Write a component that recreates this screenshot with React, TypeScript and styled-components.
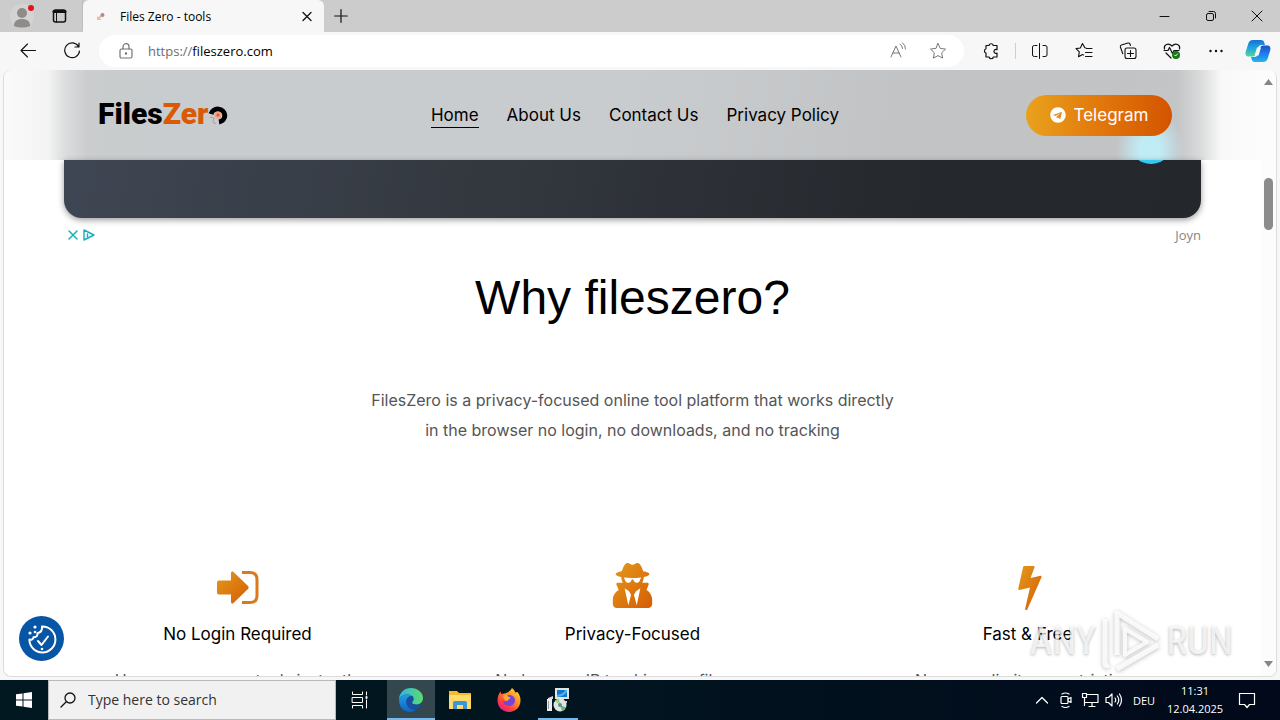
import React from 'react';
import styled, { createGlobalStyle, css } from 'styled-components';
import { FaUserSecret, FaTelegram } from 'react-icons/fa';

const ui = '"Open Sans", "Noto Sans", sans-serif';
const site = 'Inter, "Liberation Sans", sans-serif';

const GlobalStyle = createGlobalStyle`
  * { box-sizing: border-box; }
  body { margin: 0; overflow: hidden; font-family: ${ui}; color: #000; }
  button { margin: 0; padding: 0; border: 0; background: none; font: inherit; color: inherit; }
  svg { display: block; flex: none; }
`;

const Desktop = styled.div`
  height: 100vh;
  display: flex;
  flex-direction: column;
  background: #f7f7f7;
`;

/* Browser frame */
const TabStrip = styled.div`
  display: flex;
  height: 32px;
  flex: none;
  background: #cccccc;
`;
const Leading = styled.div`
  width: 83px;
  display: flex;
  align-items: center;
  gap: 12px;
  padding-left: 9px;
  border-radius: 0 0 4px 0;
  border-right: 1px solid #bdbdbd;
`;
const Tab = styled.div`
  width: 241px;
  display: flex;
  align-items: center;
  padding: 0 9px 0 10px;
  background: #f7f7f7;
  border-radius: 6px 6px 0 0;
  font-size: 12px;
`;
const TabTitle = styled.span`
  flex: 1;
  margin-left: 11px;
`;
const StripButton = styled.button<{ $w: number }>`
  width: ${(p) => p.$w}px;
  height: 32px;
  display: grid;
  place-items: center;
`;
const WindowControls = styled.div`
  display: flex;
  margin-left: auto;
`;
const Toolbar = styled.div`
  display: flex;
  align-items: center;
  height: 38px;
  flex: none;
  padding: 0 2px 0 6px;
  background: #f7f7f7;
`;
const ToolButton = styled.button<{ $w?: number }>`
  width: ${(p) => p.$w ?? 44}px;
  height: 32px;
  display: grid;
  place-items: center;
`;
const Divider = styled.span`
  width: 1px;
  height: 16px;
  margin: 0 2px;
  background: #cfcfcf;
`;
const AddressBar = styled.div`
  flex: 1;
  height: 32px;
  margin: 0 5px;
  padding: 0 6px 0 19px;
  display: flex;
  align-items: center;
  gap: 14px;
  border-radius: 16px;
  background: #fff;
  font-size: 13px;
`;
const Url = styled.span`
  flex: 1;
  color: #000;
  span { color: #6d6d6d; }
`;
const AddressActions = styled.div`
  display: flex;
`;

/* Page */
const Frame = styled.div`
  flex: 1;
  min-height: 0;
  margin: 0 3px 3px;
  display: flex;
  border: 1px solid #dcdcdc;
  border-top: 0;
  border-radius: 8px;
  overflow: hidden;
  background: #fff;
  position: relative;
`;
const Page = styled.div`
  flex: 1;
  min-width: 0;
  overflow: hidden;
  font-family: ${site};
`;
const Header = styled.header`
  height: 90px;
  padding: 0 89px 0 94px;
  display: grid;
  grid-template-columns: 1fr auto 1fr;
  align-items: center;
  background:
    radial-gradient(ellipse 34px 42px at calc(100% - 111px) 80px, #c0ecf6 30%, rgba(192, 236, 246, 0) 100%),
    linear-gradient(90deg, #fafafa 0, #f4f4f4 44px, #dcdedf 60px, #cacccd 84px, rgba(202, 204, 205, 0) 140px),
    linear-gradient(270deg, #fcfcfc 0, #f8f8f8 40px, #dadbdb 60px, #c4c5c6 84px, rgba(196, 197, 198, 0) 140px),
    linear-gradient(100deg, #c9ccce 0%, #c9ccce 50%, #c1c3c5 72%, #c3c4c5 100%);
`;
const Logo = styled.a`
  display: flex;
  align-items: center;
  color: #000;
  font: 900 30px/32px Roboto, sans-serif;
  padding-bottom: 2px;
  text-decoration: none;
  b { color: #d85a06; font-weight: 900; }
`;
const Nav = styled.nav`
  display: flex;
  gap: 28px;
`;
const NavLink = styled.a<{ $active?: boolean }>`
  color: #000;
  font-size: 17px;
  line-height: 24px;
  text-decoration: none;
  white-space: nowrap;
  border-bottom: 1px solid ${(p) => (p.$active ? '#000' : 'transparent')};
`;
const TelegramButton = styled.button`
  justify-self: end;
  display: flex;
  align-items: center;
  justify-content: center;
  gap: 8px;
  width: 146px;
  height: 41px;
  border-radius: 21px;
  background: linear-gradient(90deg, #e9a21c, #e2780c 50%, #d35400);
  color: #fff;
  font-size: 17px;
`;
const Banner = styled.div`
  height: 58px;
  margin: 0 60px;
  position: relative;
  overflow: hidden;
  border-radius: 0 0 18px 18px;
  background: linear-gradient(100deg, #3f4653 0%, #343940 35%, #25282d 75%, #24272c 100%);
`;
const BannerShadow = styled.div`
  border-radius: 18px;
  filter: drop-shadow(0 2px 3px rgba(0, 0, 0, 0.4));
`;
const BannerBadge = styled.span`
  position: absolute;
  right: 28px;
  top: -40px;
  width: 44px;
  height: 44px;
  border-radius: 50%;
  background: #35c8f0;
`;
const AdRow = styled.div`
  display: flex;
  align-items: center;
  height: 18px;
  margin: 8px 60px 0;
  padding-left: 3px;
  gap: 4px;
  font: 13px/18px ${ui};
  color: #858585;
`;
const AdLabel = styled.span`
  margin-left: auto;
`;
const Title = styled.h1`
  margin: 24px 0 0;
  font-family: "Liberation Sans", Arial, sans-serif;
  font-size: 48px;
  line-height: 60px;
  font-weight: 400;
  text-align: center;
`;
const Intro = styled.p`
  max-width: 536px;
  margin: 57px auto 0;
  font-size: 16px;
  line-height: 30px;
  color: #555;
  text-align: center;
`;
const Features = styled.section`
  display: grid;
  grid-template-columns: repeat(3, 1fr);
  margin: 115px 36px 0;
  text-align: center;
`;
const FeatureIcon = styled.div`
  height: 50px;
  display: grid;
  place-items: center;
`;
const FeatureTitle = styled.h2`
  margin: 10px 0 0;
  font-size: 17px;
  line-height: 28px;
  font-weight: 400;
`;
const FeatureText = styled.p`
  margin: 17px 0 0;
  font-size: 16px;
  line-height: 30px;
  color: #555;
`;
const Scrollbar = styled.div`
  width: 15px;
  flex: none;
  display: flex;
  flex-direction: column;
  align-items: center;
  padding: 9px 0;
  background: #fcfcfc;
`;
const Thumb = styled.div`
  width: 9px;
  height: 52px;
  margin-top: 93px;
  border-radius: 5px;
  background: #8b8b8b;
`;
const ScrollEnd = styled.div`
  margin-top: auto;
`;
const CookieButton = styled.button`
  position: absolute;
  left: 15px;
  bottom: 15px;
  width: 45px;
  height: 45px;
  border-radius: 50%;
  background: #0755a5;
  display: grid;
  place-items: center;
`;
const Watermark = styled.div`
  position: absolute;
  right: 43px;
  bottom: 3px;
  display: flex;
  align-items: center;
  gap: 4px;
  color: rgba(255, 255, 255, 0.75);
  font: 400 39px/64px "Liberation Sans Narrow", "Roboto Condensed", "Liberation Sans", sans-serif;
  text-shadow: 0 1px 3px rgba(0, 0, 0, 0.3);
  svg { filter: drop-shadow(0 1px 2px rgba(0, 0, 0, 0.3)); }
`;

/* Taskbar */
const Taskbar = styled.div`
  height: 40px;
  flex: none;
  display: flex;
  background: linear-gradient(90deg, #011820, #01141f 50%, #01091b);
  color: #fff;
`;
const TaskButton = styled.button<{ $state?: 'active' | 'open' }>`
  width: 48px;
  margin-right: 1px;
  display: grid;
  place-items: center;
  ${(p) => p.$state === 'active' && css`background: #34464e; box-shadow: inset 0 -2px #76b9ed;`}
  ${(p) => p.$state === 'open' && css`
    background: linear-gradient(#76b9ed, #76b9ed) center bottom / 40px 2px no-repeat;
  `}
`;
const StartButton = styled(TaskButton)`
  margin-right: 0;
`;
const PinnedApps = styled.div`
  display: flex;
  margin-left: 2px;
`;
const SearchBox = styled.label`
  width: 288px;
  display: flex;
  align-items: center;
  gap: 12px;
  padding-left: 11px;
  border: 1px solid #b9b9b9;
  background: #f1f1f1;
  color: #222;
`;
const SearchInput = styled.input`
  flex: 1;
  min-width: 0;
  padding: 0;
  border: 0;
  outline: 0;
  background: none;
  font: 14px/20px ${ui};
  &::placeholder { color: #333; opacity: 1; }
`;
const Tray = styled.div`
  margin-left: auto;
  display: flex;
  align-items: center;
  padding-right: 14px;
  font-size: 11px;
`;
const TrayButton = styled.button<{ $w?: number }>`
  width: ${(p) => p.$w ?? 24}px;
  height: 40px;
  display: grid;
  place-items: center;
`;
const Clock = styled.time`
  width: 66px;
  line-height: 18px;
  text-align: center;
`;

type IconProps = { w: number; h?: number; sw?: number; color?: string; children: React.ReactNode };
const Line = ({ w, h = w, sw = 1, color = '#111', children }: IconProps) => (
  <svg width={w} height={h} viewBox={`0 0 ${w} ${h}`} fill="none" stroke={color} strokeWidth={sw} strokeLinecap="round" strokeLinejoin="round" aria-hidden="true">
    {children}
  </svg>
);

const Profile = () => (
  <svg width="26" height="26" viewBox="0 0 26 26" aria-hidden="true">
    <circle cx="13" cy="13" r="12" fill="#d5d3d1" />
    <circle cx="13" cy="10" r="5" fill="#8f8b88" />
    <path d="M5 23c0-5 3-7 8-7s8 2 8 7c-5 2-11 2-16 0z" fill="#8f8b88" />
    <circle cx="22" cy="5" r="3" fill="#e3131d" />
  </svg>
);

const CookieIcon = () => (
  <Line w={34} sw={2} color="#fff">
    <path d="M17 4.500a13 13 0 1 1-12.600 13c2 .7 4-.3 4-2.300 3 .4 4.600-1.800 4-4 3-.6 5-3 4.600-6.700z" />
    <path d="m13 19 3.500 4 6.500-8.500" />
    <g fill="#fff" stroke="none">
      <circle cx="10" cy="5" r="1.600" /><circle cx="5" cy="11" r="1.600" /><circle cx="10" cy="10" r="1.300" /><circle cx="17" cy="27" r="1.300" />
    </g>
  </Line>
);

const Copilot = () => (
  <svg width="26" height="24" viewBox="0 0 26 24" aria-hidden="true">
    <defs>
      <linearGradient id="cpA" x1="0" y1="0" x2="0" y2="1"><stop stopColor="#1671d6" /><stop offset=".5" stopColor="#20a8dd" /><stop offset="1" stopColor="#55d59a" /></linearGradient>
      <linearGradient id="cpB" x1="0" y1="0" x2="0" y2="1"><stop stopColor="#1d4fc9" /><stop offset=".6" stopColor="#1f87f0" /><stop offset="1" stopColor="#22b5ee" /></linearGradient>
    </defs>
    <path d="M8 1h8c2 0 3 1.200 3.400 3L20 6h-3.500c-2 0-3 1-3.500 3l-2 6c-.6 1.500-1.500 2.500-3 2.500H4c-3 0-4-2-3.200-5L3.500 4C4.200 2 5.800 1 8 1z" fill="url(#cpA)" />
    <path d="M18 23h-8c-2 0-3-1.200-3.400-3L6 18h3.500c2 0 3-1 3.500-3l2-6c.6-1.500 1.500-2.500 3-2.500H22c3 0 4 2 3.200 5L22.500 20c-.7 2-2.300 3-4.500 3z" fill="url(#cpB)" />
    <path d="M12 8.500h4l-2.500 8h-4z" fill="#f7f7f7" />
  </svg>
);

const EdgeIcon = () => (
  <svg width="26" height="26" viewBox="0 0 26 26" aria-hidden="true">
    <defs>
      <linearGradient id="egA" x1="0" y1="0" x2="1" y2="0"><stop stopColor="#2fb5ea" /><stop offset="1" stopColor="#5bdc6c" /></linearGradient>
      <linearGradient id="egB" x1="0" y1="0" x2="0" y2="1"><stop stopColor="#209ee5" /><stop offset="1" stopColor="#0f62c4" /></linearGradient>
    </defs>
    <path d="M1 13C1 5.500 6.500 1 13 1s12 4.500 12 10c0 4-3 6.500-6.500 6.500-3 0-4.500-1-4.500-2 0-.8 1.500-1.300 1.500-3.500 0-3-2.700-4.500-6-4.500C5 7.500 2 9.500 1 13z" fill="url(#egA)" />
    <path d="M1 13c1-3.500 4.500-5.500 8.500-5.500 1.800 0 3.500.5 4.600 1.500C10 9 8 12 8.500 15.500 9 20 13 23.500 18 22.500c-1.500 1.500-3.500 2.500-6 2.500C5.500 25 1 19.500 1 13z" fill="url(#egB)" />
    <path d="M8.500 15.500C8 12.500 10 9.500 14 9c1 .8 1.500 2 1.500 3 0 2.200-1.500 2.700-1.500 3.500 0 2.500 5 3.500 9 1 .6-.3 1 .2.600.8-1.200 2-3 4-5.600 5.200-5 1-9-2.500-9.500-7z" fill="#164fa3" />
  </svg>
);

const Explorer = () => (
  <svg width="22" height="20" viewBox="0 0 22 20" aria-hidden="true">
    <path d="M0 1h8l2 2h12v16H0z" fill="#f5b92c" /><path d="M0 5h22v14H0z" fill="#ffda6a" />
    <path d="M4 19v-6q0-2 2-2h10q2 0 2 2v6h-4v-4H8v4z" fill="#3a96d6" />
  </svg>
);

const Firefox = () => (
  <svg width="24" height="24" viewBox="0 0 24 24" aria-hidden="true">
    <defs><linearGradient id="ffx" x1="1" y1="0" x2=".2" y2="1"><stop stopColor="#ffe345" /><stop offset=".45" stopColor="#ff8b21" /><stop offset=".8" stopColor="#fb3350" /><stop offset="1" stopColor="#e5178e" /></linearGradient></defs>
    <path d="M15 0c2 1.500 3 3 3.200 4.600L20.500 4c2 2.500 3 5 3 8.500C23.500 19 18.500 24 12 24S.5 19 .5 12.500C.5 9 1.500 6 3.500 3.500L4.200 6 7 5.500C9 5 13 4 15 0z" fill="url(#ffx)" />
    <path d="M12 7c4 0 6 2.500 6 5.500s-2.500 5.500-6 5.500-6-2.500-6-5.500c2 1.500 4 1 5-.5-2 0-3-1-3-2.500 1-1.500 2.500-2.500 4-2.500z" fill="#7a43d8" />
    <path d="M6 8c1-1 2.500-1.500 4-1l1.500 2c1.500 0 2 .5 1.500 1.500-1 .5-1.500 1-2 2-2 1-4-.5-5-4.500z" fill="#ffad27" />
  </svg>
);

const Installer = () => (
  <svg width="24" height="26" viewBox="0 0 24 26" aria-hidden="true">
    <path d="M9 1h14v11H9z" fill="#e4e4e4" /><path d="M11 3h10v7H11z" fill="#1273d1" /><path d="M11 8c4-1 7-2 8-5h2v2c-2 3-5 4.500-10 5z" fill="#47b3ee" />
    <path d="M14 12h4v2h3v2H12z" fill="#c9c9c9" />
    <path d="M1 12h5v12H1z" fill="#eee" /><path d="M2 14h1v8H2z" fill="#999" /><path d="m2 11 5-2v3H2z" fill="#d7d7d7" />
    <circle cx="14" cy="18" r="6.500" fill="#dde6e3" /><path d="M14 18 9 14a6.500 6.500 0 0 1 4-2.400z" fill="#9dcf7f" /><path d="m14 18 6 2.500a6.500 6.500 0 0 1-4 3.700z" fill="#69b67b" />
    <circle cx="14" cy="18" r="2" fill="#6c8792" />
  </svg>
);

const features = [
  {
    title: 'No Login Required',
    text: 'Use our awesome tools instantly',
    icon: (
      <svg width="42" height="42" viewBox="0 -6 42 42" aria-hidden="true">
        <path d="M2 10.500h12V3q0-2 2-1.500l15 14.500q1.500 1.500 0 3L16 33.500q-2 .5-2-1.500v-7.500H2q-2 0-2-2v-10q0-2 2-2z" fill="url(#warm)" />
        <path d="M25 2.500h8q7 0 7 7v16q0 7-7 7h-8" fill="none" stroke="#d97b1c" strokeWidth="3" />
      </svg>
    ),
  },
  {
    title: 'Privacy-Focused',
    text: 'No logs, no IP tracking, no file saves',
    icon: <FaUserSecret size={45} fill="url(#warm)" />,
  },
  {
    title: 'Fast & Free',
    text: 'No usage limits or restrictions',
    icon: (
      <svg width="28" height="50" viewBox="-4 -6 28 50" aria-hidden="true">
        <path d="M6.500 0h9q1.500 0 1 1.500L12.500 12l10-2.200q1.500 0 1 1.500L9.500 43q-.5 1.500-1.800 1-.8-.5-.5-1.500L12 21.500 1.500 24Q0 24 .3 22.500L5 1.200Q5.300 0 6.500 0z" fill="url(#warm)" />
      </svg>
    ),
  },
];

export default function App() {
  return (
    <Desktop>
      <GlobalStyle />
      <TabStrip>
        <Leading>
          <Profile />
          <Line w={26} sw={1.500}><rect x="6.500" y="7" width="12" height="12" rx="2" /><path d="M7 8.500h11" strokeWidth="3" /><path d="M9.500 10v9" strokeWidth="1" /></Line>
        </Leading>
        <Tab>
          <Line w={16} sw={2} color="#f0b79c"><path d="m5 11 3-3" /><circle cx="9.500" cy="7" r="1" stroke="#b08a80" /><path d="M4.500 9v2.500h3" strokeWidth="1" /></Line>
          <TabTitle>Files Zero - tools</TabTitle>
          <button aria-label="Close tab"><Line w={16}><path d="m4 4.500 8 8m0-8-8 8" strokeWidth="1.300" /></Line></button>
        </Tab>
        <StripButton $w={34} aria-label="New tab"><Line w={14} sw={1.200}><path d="M7 .7v12.600M.7 7h12.600" /></Line></StripButton>
        <WindowControls>
          <StripButton $w={46} aria-label="Minimize"><Line w={12}><path d="M1 6.500h9" /></Line></StripButton>
          <StripButton $w={46} aria-label="Restore"><Line w={12}><rect x="1.500" y="3.500" width="7" height="7" rx="1.500" /><path d="M4 1.500h4.500q2 0 2 2V8" /></Line></StripButton>
          <StripButton $w={46} aria-label="Close"><Line w={12}><path d="m1 1 10 10m0-10L1 11" /></Line></StripButton>
        </WindowControls>
      </TabStrip>

      <Toolbar>
        <ToolButton aria-label="Back"><Line w={18} sw={1.100}><path d="M16.500 8.500H2M8.500 2 2 8.500 8.500 15" /></Line></ToolButton>
        <ToolButton aria-label="Refresh"><Line w={18} sw={1.200}><path d="M15.500 4.500A7.400 7.400 0 1 0 16.500 9M16 1v4h-4" /></Line></ToolButton>
        <AddressBar>
          <Line w={16} color="#757575" sw={1.200}><rect x="2" y="6" width="12" height="9" rx="1.500" /><path d="M5 6V3.700a3 3 0 0 1 6 0V6" /><circle cx="8" cy="10.500" r=".6" fill="#757575" /></Line>
          <Url><span>https://</span>fileszero.com</Url>
          <AddressActions>
            <ToolButton $w={40} aria-label="Read aloud"><Line w={18} color="#777"><path d="m2 15 5-11 5 11M3.800 11h6.400M11 2q2.500 1.500 2.500 4.500M13.500.8Q16.700 3 16.500 7" /></Line></ToolButton>
            <ToolButton $w={40} aria-label="Add to favorites"><Line w={18} color="#777"><path d="m9 1.500 2.300 4.900 5.200.7-3.800 3.700.9 5.300L9 13.600l-4.600 2.500.9-5.300L1.500 7.100l5.200-.7z" /></Line></ToolButton>
          </AddressActions>
        </AddressBar>
        <ToolButton aria-label="Extensions"><Line w={18} sw={1.200}><path d="M4 3.500h3a2.200 2.200 0 0 1 4.300 0H15v4.200a2 2 0 1 0 0 3.400V15h-3.600a2.200 2.200 0 0 1-4.300 0H4v-4a2.200 2.200 0 0 1 0-4.200z" /></Line></ToolButton>
        <Divider />
        <ToolButton aria-label="Split screen"><Line w={18}><path d="M6 3.500H3.500Q1.500 3.500 1.500 5v8q0 1.500 2 1.500H6M12 3.500h2Q16 3.500 16 5v8q0 1.500-2 1.500h-2M8.500 1.500v15" /></Line></ToolButton>
        <ToolButton aria-label="Favorites"><Line w={18} sw={1.100}><path d="M11 6 9.800 5.800 7.500 1.500 5.300 6l-4.300.6 3.300 3.200-.8 5 4-2.300 1 .5M11.500 6.500h5.500M10.500 10.500h6.500M10.500 14.500h6.500" /></Line></ToolButton>
        <ToolButton aria-label="Collections"><Line w={18} sw={1.100}><rect x="6" y="6" width="11" height="10.500" rx="2" /><path d="M3.800 11.800 1.400 5q-.4-1.500 1-2L9 1q1.500-.3 2 1l.4 1.500M11.500 8.500v6M8.500 11.500h6" /></Line></ToolButton>
        <ToolButton aria-label="Browser essentials"><Line w={18} sw={1.200}><path d="M1.500 7C.5 3 5 0 9 4c4-4 8.500-1 7.500 3M1 8.500h4l1.500-3 3 6 1.500-3h5M3 11l5 5" /><circle cx="13" cy="13" r="4" fill="#157c17" stroke="none" /><path d="m11.500 13 1 1 2-2" stroke="#fff" strokeWidth="1" /></Line></ToolButton>
        <ToolButton aria-label="Settings and more"><Line w={18} sw={2.400}><path d="M3.500 9h.01M9 9h.01M14.500 9h.01" /></Line></ToolButton>
        <ToolButton $w={40} aria-label="Copilot"><Copilot /></ToolButton>
      </Toolbar>

      <Frame>
        <Page>
          <Header>
            <Logo href="#home">
              Files<b>Zer</b>
              <svg width="20" height="24" viewBox="0 0 20 24" aria-hidden="true">
                <path d="M3 12a7 6.500 0 1 1 8 8" fill="none" stroke="#000" strokeWidth="5" />
                <circle cx="10" cy="13" r="3.500" fill="#f2a184" /><circle cx="10" cy="13" r="1.500" fill="#e05a1c" />
                <path d="m2 15 4 1-1 4 3 2" fill="none" stroke="#d98c79" />
              </svg>
            </Logo>
            <Nav>
              <NavLink href="#home" $active>Home</NavLink>
              <NavLink href="#about">About Us</NavLink>
              <NavLink href="#contact">Contact Us</NavLink>
              <NavLink href="#privacy">Privacy Policy</NavLink>
            </Nav>
            <TelegramButton><FaTelegram size={16} />Telegram</TelegramButton>
          </Header>
          <BannerShadow><Banner><BannerBadge /></Banner></BannerShadow>
          <AdRow>
            <Line w={12} sw={1.500} color="#18aebe"><path d="m2 2 8 8m0-8-8 8" /></Line>
            <Line w={12} sw={1.400} color="#18aebe"><path d="M1 1v10l10-5zM4.500 5v3" /></Line>
            <AdLabel>Joyn</AdLabel>
          </AdRow>
          <Title>Why fileszero?</Title>
          <Intro>FilesZero is a privacy-focused online tool platform that works directly in the browser no login, no downloads, and no tracking</Intro>
          <Features>
            {features.map((f) => (
              <article key={f.title}>
                <FeatureIcon>{f.icon}</FeatureIcon>
                <FeatureTitle>{f.title}</FeatureTitle>
                <FeatureText>{f.text}</FeatureText>
              </article>
            ))}
          </Features>
        </Page>
        <Scrollbar>
          <svg width="9" height="6" viewBox="0 0 9 6" aria-hidden="true">
            <defs>
              <linearGradient id="warm" x1="0" y1="0" x2="1" y2="1">
                <stop stopColor="#e39a1d" /><stop offset="1" stopColor="#d65c03" />
              </linearGradient>
            </defs>
            <path d="M4.500 0 9 6H0z" fill="#858585" />
          </svg>
          <Thumb />
          <ScrollEnd><svg width="9" height="6" viewBox="0 0 9 6" aria-hidden="true"><path d="M4.500 6 9 0H0z" fill="#858585" /></svg></ScrollEnd>
        </Scrollbar>
        <CookieButton aria-label="Cookie settings"><CookieIcon /></CookieButton>
        <Watermark>
          ANY
          <svg width="62" height="64" viewBox="0 0 62 64" fill="none" stroke="rgba(255,255,255,.85)" strokeWidth="5" strokeLinejoin="round" aria-hidden="true">
            <path d="M17 46V4l41 26" /><path d="M5 10v44q0 4 4 2M17 60l41-24" /><path d="M25 20v26l22-13z" strokeWidth="4" />
          </svg>
          RUN
        </Watermark>
      </Frame>

      <Taskbar>
        <StartButton aria-label="Start">
          <svg width="16" height="16" viewBox="0 0 16 16" fill="#fff" aria-hidden="true"><path d="M0 2.300 6.500 1.400v6.100H0zM7.500 1.200 16 0v7.500H7.500zM0 8.500h6.500v6.100L0 13.700zM7.500 8.500H16V16l-8.500-1.200z" /></svg>
        </StartButton>
        <SearchBox>
          <Line w={16} sw={1.300}><circle cx="10" cy="6" r="5" /><path d="M6.300 9.700 1 15" /></Line>
          <SearchInput type="text" placeholder="Type here to search" aria-label="Type here to search" />
        </SearchBox>
        <TaskButton aria-label="Task view">
          <Line w={18} color="#fff"><path d="M1.500 1v2.500h10V1M1.500 17v-2.500h10V17M1.500 6.500h10v5h-10zM15.500 1v3M15.500 9v8" /><path d="M15.500 6v1" strokeWidth="2" /></Line>
        </TaskButton>
        <PinnedApps>
          <TaskButton $state="active" aria-label="Microsoft Edge"><EdgeIcon /></TaskButton>
          <TaskButton aria-label="File Explorer"><Explorer /></TaskButton>
          <TaskButton aria-label="Firefox"><Firefox /></TaskButton>
          <TaskButton $state="open" aria-label="Installer"><Installer /></TaskButton>
        </PinnedApps>
        <Tray>
          <TrayButton aria-label="Show hidden icons"><Line w={14} sw={1.300} color="#fff"><path d="m1.500 10 5.500-5.500 5.500 5.500" /></Line></TrayButton>
          <TrayButton aria-label="Meet now"><Line w={16} color="#fff" sw={1.200}><rect x="3" y="4.500" width="7" height="7" rx="1" /><path d="m10 7 3-1.500v5L10 9M4 2q3.500-2 7 0M4 14.500q3.500 2 7 0" /></Line></TrayButton>
          <TrayButton aria-label="Network"><Line w={18} color="#fff" sw={1.200}><path d="M6 3.500h11v8H4M8 15.500h6M11 11.500v4M1.500 2.500h4v4h-4zM3.500 6.500v8" /></Line></TrayButton>
          <TrayButton aria-label="Volume"><Line w={18} color="#fff" sw={1.200}><path d="M1 6.500h2.500L7 3v12l-3.500-3.500H1zM10 7q1.500 2 0 4M12.300 5q3 4 0 8M14.500 3q4 6 0 12" /></Line></TrayButton>
          <TrayButton $w={36} aria-label="Keyboard language">DEU</TrayButton>
          <Clock>11:31<br />12.04.2025</Clock>
          <TrayButton $w={38} aria-label="Notifications"><Line w={18} color="#fff" sw={1.200}><path d="M1.500 2.500h15v11h-5L9 16.500l-2.500-3h-5z" /></Line></TrayButton>
        </Tray>
      </Taskbar>
    </Desktop>
  );
}
